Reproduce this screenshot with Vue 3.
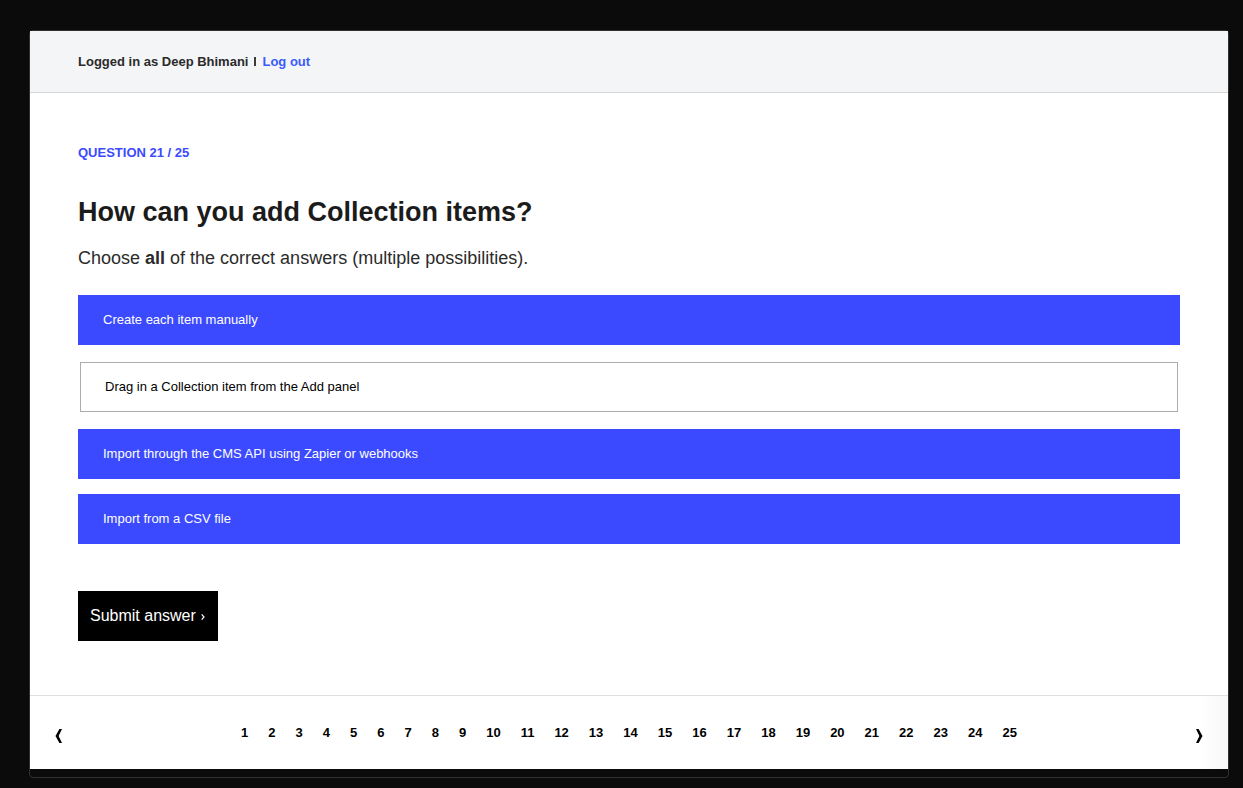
<script setup>
import { ref } from 'vue'

const current = 21
const total = 25
const answers = ref([
  { id: 'manual', text: 'Create each item manually', checked: true },
  { id: 'drag', text: 'Drag in a Collection item from the Add panel', checked: false },
  { id: 'api', text: 'Import through the CMS API using Zapier or webhooks', checked: true },
  { id: 'csv', text: 'Import from a CSV file', checked: true },
])
</script>

<template>
  <div class="backdrop">
    <div class="window">
      <header class="account">
        <span>Logged in as Deep Bhimani</span>
        <span class="divider"></span>
        <a class="logout" href="#">Log out</a>
      </header>

      <main class="quiz">
        <p class="counter">QUESTION {{ current }} / {{ total }}</p>
        <h1 class="title">How can you add Collection items?</h1>
        <p class="hint">Choose <strong>all</strong> of the correct answers (multiple possibilities).</p>

        <form @submit.prevent>
          <div class="answers">
            <label v-for="a in answers" :key="a.id" class="answer" :class="{ selected: a.checked }" :for="a.id">
              <input :id="a.id" v-model="a.checked" class="check" type="checkbox" />
              {{ a.text }}
            </label>
          </div>
          <button class="submit" type="submit">
            Submit answer
            <svg class="chevron" width="4" height="6" viewBox="0 0 4 6" aria-hidden="true"><path d="M.7 .4 3 3 .7 5.600" /></svg>
          </button>
        </form>
      </main>

      <nav class="pager" aria-label="Questions">
        <button class="arrow" type="button" aria-label="Previous question">
          <svg width="8" height="14" viewBox="0 0 8 14"><path d="M4.400 0H7L3.600 7 7 14H4.400L.5 7z" /></svg>
        </button>
        <div class="pages">
          <a v-for="n in total" :key="n" class="page" href="#">{{ n }}</a>
        </div>
        <button class="arrow" type="button" aria-label="Next question">
          <svg width="8" height="14" viewBox="0 0 8 14"><path d="M3.600 0H1L4.400 7 1 14h2.600L7.500 7z" /></svg>
        </button>
      </nav>
    </div>
  </div>
</template>

<style>
body {
  margin: 0;
  background: #0b0b0b;
}
</style>

<style scoped>
.backdrop {
  box-sizing: border-box;
  min-height: 100vh;
  display: flex;
  padding: 30px 14px 10px 29px;
  background: #0b0b0b;
  font-family: "Liberation Sans", Arial, sans-serif;
  color: #2b2b2b;
}
.window {
  flex: 1;
  display: flex;
  flex-direction: column;
  padding-bottom: 8px;
  border: 1px solid #303030;
  border-radius: 4px;
}
.account {
  display: flex;
  align-items: center;
  padding: 21px 48px 20px;
  background: #f4f5f7;
  border-bottom: 1px solid #d6d6d6;
  font-size: 13px;
  line-height: 20px;
  font-weight: 700;
}
.divider {
  width: 2px;
  height: 9px;
  margin: 0 6px 2px;
  background: #3c3c3c;
}
.logout {
  color: #3b5bfd;
  text-decoration: none;
}
.quiz {
  flex: 1;
  padding: 50px 48px 53px;
  background: #fff;
}
.counter {
  margin: 0;
  font-size: 13px;
  line-height: 20px;
  font-weight: 700;
  color: #3b4aff;
}
.title {
  margin: 31px 0 0;
  font-size: 27px;
  line-height: 36px;
  color: #1b1b1b;
}
.hint {
  margin: 15px 0 0;
  font-size: 18px;
  line-height: 26px;
}
.answers {
  display: flex;
  flex-direction: column;
  gap: 15px;
  margin-top: 24px;
}
.answer {
  box-sizing: border-box;
  position: relative;
  margin: 2px;
  padding: 14px 24px;
  border: 1px solid #adadad;
  background: #fff;
  font-size: 13px;
  line-height: 20px;
  color: #000;
  cursor: pointer;
}
.answer.selected {
  margin: 0;
  border-color: #3b4aff;
  background: #3b4aff;
  color: #fff;
}
.check {
  position: absolute;
  inset: 0;
  margin: 0;
  opacity: 0;
  cursor: pointer;
}
.submit {
  display: flex;
  align-items: center;
  gap: 5px;
  margin: 47px 0 0;
  padding: 13px 13px 13px 12px;
  border: 0;
  background: #000;
  color: #fff;
  font-family: inherit;
  font-size: 16px;
  line-height: 24px;
}
.chevron {
  margin-top: 2px;
  fill: none;
  stroke: #fff;
  stroke-width: 1.2;
}
.pager {
  display: flex;
  align-items: center;
  justify-content: space-between;
  padding: 26px 22px;
  border-top: 1px solid #dedfdf;
  background: linear-gradient(to right, #fff calc(100% - 30px), #f8f8f9);
}
.pages {
  display: flex;
  gap: 20px;
}
.page {
  color: #000;
  font-size: 13px;
  line-height: 20px;
  font-weight: 700;
  text-decoration: none;
}
.arrow {
  display: flex;
  padding: 7px 3px 0;
  border: 0;
  background: none;
}
.arrow path {
  fill: #000;
}
</style>
